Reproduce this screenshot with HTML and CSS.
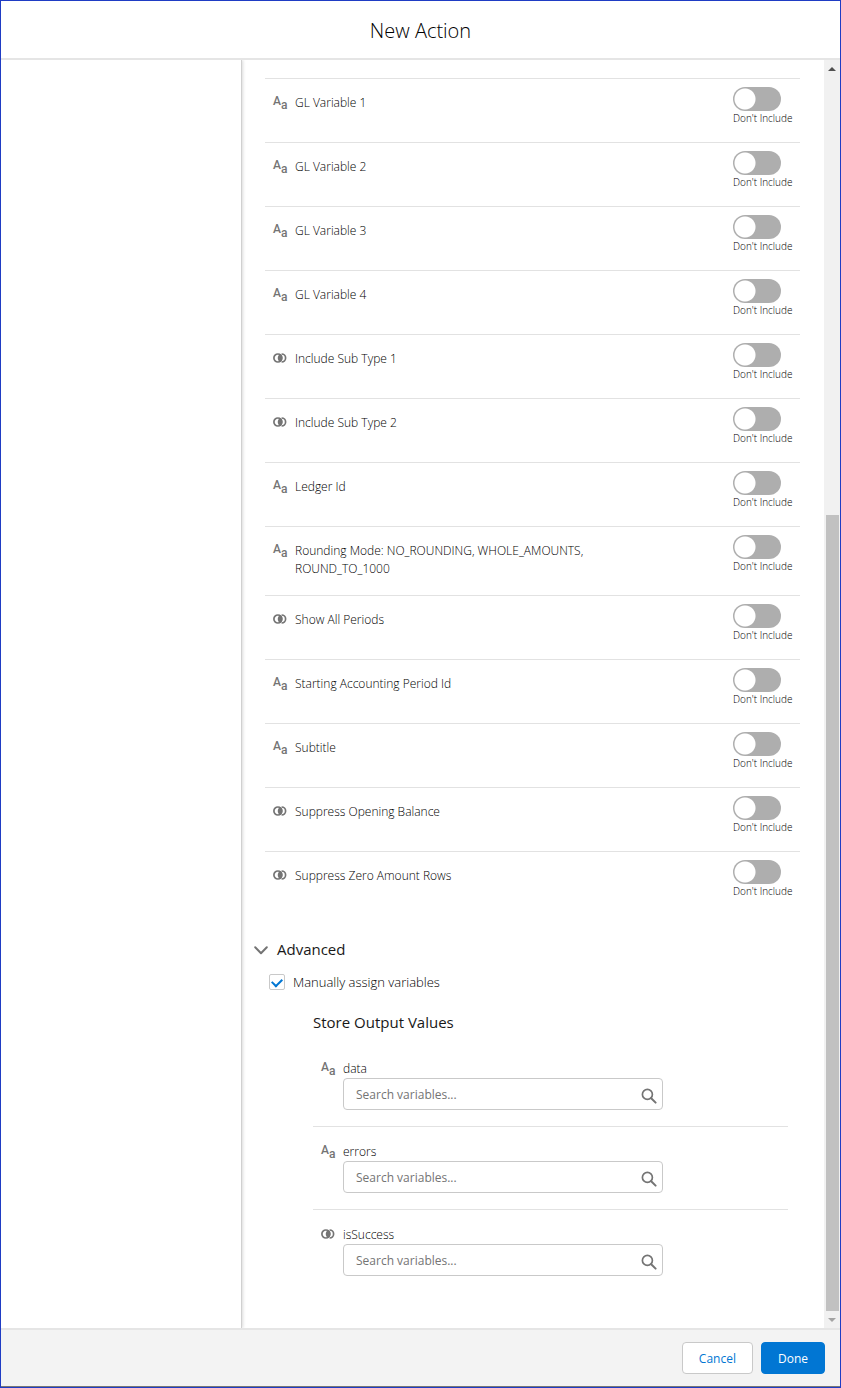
FILE: index.html
```
<!DOCTYPE html>
<html lang="en">
<head>
    <meta charset="UTF-8">
    <meta name="viewport" content="width=device-width, initial-scale=1.0">
    <title>New Action</title>
    <link rel="stylesheet" href="styles.css">
</head>
<body>
    <svg class="sprite" aria-hidden="true">
        <symbol id="icon-boolean" viewBox="0 0 14 10">
            <circle cx="4.9" cy="5" r="4" fill="none" stroke="currentColor" stroke-width="1.7"/>
            <path d="M8.600 1a4 4 0 1 1 0 8" fill="none" stroke="currentColor" stroke-width="1.7"/>
            <path d="M7 1a4.700 4.700 0 0 1 0 8a4.700 4.700 0 0 1 0-8z" fill="currentColor"/>
        </symbol>
        <symbol id="icon-search" viewBox="0 0 16 16">
            <circle cx="6.4" cy="6.4" r="5" fill="none" stroke="currentColor" stroke-width="1.7"/>
            <path d="M10.2 10.2l4.4 4.4" fill="none" stroke="currentColor" stroke-width="2" stroke-linecap="round"/>
        </symbol>
    </svg>

    <div class="modal">
        <header class="modal-header">
            <h1>New Action</h1>
        </header>

        <div class="modal-body">
            <aside class="sidebar"></aside>

            <main class="content">
                <ul class="param-list">
                    <li class="param">
                        <span class="type-icon type-text" aria-hidden="true">A<span>a</span></span>
                        <label class="param-name" for="gl1">GL Variable 1</label>
                        <div class="toggle"><input type="checkbox" id="gl1"><span>Don't Include</span></div>
                    </li>
                    <li class="param">
                        <span class="type-icon type-text" aria-hidden="true">A<span>a</span></span>
                        <label class="param-name" for="gl2">GL Variable 2</label>
                        <div class="toggle"><input type="checkbox" id="gl2"><span>Don't Include</span></div>
                    </li>
                    <li class="param">
                        <span class="type-icon type-text" aria-hidden="true">A<span>a</span></span>
                        <label class="param-name" for="gl3">GL Variable 3</label>
                        <div class="toggle"><input type="checkbox" id="gl3"><span>Don't Include</span></div>
                    </li>
                    <li class="param">
                        <span class="type-icon type-text" aria-hidden="true">A<span>a</span></span>
                        <label class="param-name" for="gl4">GL Variable 4</label>
                        <div class="toggle"><input type="checkbox" id="gl4"><span>Don't Include</span></div>
                    </li>
                    <li class="param">
                        <svg class="type-icon"><use href="#icon-boolean"/></svg>
                        <label class="param-name" for="subtype1">Include Sub Type 1</label>
                        <div class="toggle"><input type="checkbox" id="subtype1"><span>Don't Include</span></div>
                    </li>
                    <li class="param">
                        <svg class="type-icon"><use href="#icon-boolean"/></svg>
                        <label class="param-name" for="subtype2">Include Sub Type 2</label>
                        <div class="toggle"><input type="checkbox" id="subtype2"><span>Don't Include</span></div>
                    </li>
                    <li class="param">
                        <span class="type-icon type-text" aria-hidden="true">A<span>a</span></span>
                        <label class="param-name" for="ledger">Ledger Id</label>
                        <div class="toggle"><input type="checkbox" id="ledger"><span>Don't Include</span></div>
                    </li>
                    <li class="param">
                        <span class="type-icon type-text" aria-hidden="true">A<span>a</span></span>
                        <label class="param-name" for="rounding">Rounding Mode: NO_ROUNDING, WHOLE_AMOUNTS, ROUND_TO_1000</label>
                        <div class="toggle"><input type="checkbox" id="rounding"><span>Don't Include</span></div>
                    </li>
                    <li class="param">
                        <svg class="type-icon"><use href="#icon-boolean"/></svg>
                        <label class="param-name" for="periods">Show All Periods</label>
                        <div class="toggle"><input type="checkbox" id="periods"><span>Don't Include</span></div>
                    </li>
                    <li class="param">
                        <span class="type-icon type-text" aria-hidden="true">A<span>a</span></span>
                        <label class="param-name" for="starting">Starting Accounting Period Id</label>
                        <div class="toggle"><input type="checkbox" id="starting"><span>Don't Include</span></div>
                    </li>
                    <li class="param">
                        <span class="type-icon type-text" aria-hidden="true">A<span>a</span></span>
                        <label class="param-name" for="subtitle">Subtitle</label>
                        <div class="toggle"><input type="checkbox" id="subtitle"><span>Don't Include</span></div>
                    </li>
                    <li class="param">
                        <svg class="type-icon"><use href="#icon-boolean"/></svg>
                        <label class="param-name" for="opening">Suppress Opening Balance</label>
                        <div class="toggle"><input type="checkbox" id="opening"><span>Don't Include</span></div>
                    </li>
                    <li class="param">
                        <svg class="type-icon"><use href="#icon-boolean"/></svg>
                        <label class="param-name" for="zero">Suppress Zero Amount Rows</label>
                        <div class="toggle"><input type="checkbox" id="zero"><span>Don't Include</span></div>
                    </li>
                </ul>

                <section class="advanced">
                    <button type="button" class="advanced-toggle" aria-expanded="true">
                        <svg class="chevron" viewBox="0 0 14 9"><path d="M1.2 1.3L7 7.2l5.8-5.9" fill="none" stroke="currentColor" stroke-width="2" stroke-linecap="round" stroke-linejoin="round"/></svg>
                        Advanced
                    </button>

                    <label class="manual">
                        <input type="checkbox" checked>
                        Manually assign variables
                    </label>

                    <div class="outputs">
                        <h2>Store Output Values</h2>
                        <div class="output">
                            <span class="type-icon type-text" aria-hidden="true">A<span>a</span></span>
                            <div class="output-field">
                                <label for="out-data">data</label>
                                <div class="search">
                                    <input type="text" id="out-data" placeholder="Search variables...">
                                    <svg><use href="#icon-search"/></svg>
                                </div>
                            </div>
                        </div>
                        <div class="output">
                            <span class="type-icon type-text" aria-hidden="true">A<span>a</span></span>
                            <div class="output-field">
                                <label for="out-errors">errors</label>
                                <div class="search">
                                    <input type="text" id="out-errors" placeholder="Search variables...">
                                    <svg><use href="#icon-search"/></svg>
                                </div>
                            </div>
                        </div>
                        <div class="output">
                            <svg class="type-icon"><use href="#icon-boolean"/></svg>
                            <div class="output-field">
                                <label for="out-success">isSuccess</label>
                                <div class="search">
                                    <input type="text" id="out-success" placeholder="Search variables...">
                                    <svg><use href="#icon-search"/></svg>
                                </div>
                            </div>
                        </div>
                    </div>
                </section>
            </main>

            <div class="scrollbar" aria-hidden="true">
                <span class="arrow arrow-up"></span>
                <span class="track"></span>
                <span class="thumb"></span>
                <span class="arrow arrow-down"></span>
            </div>
        </div>

        <footer class="modal-footer">
            <button type="button" class="btn btn-cancel">Cancel</button>
            <button type="button" class="btn btn-done">Done</button>
        </footer>
    </div>
</body>
</html>
```
FILE: styles.css
```
* {
    box-sizing: border-box;
}
body {
    margin: 0;
    font-family: "Open Sans", "Noto Sans", sans-serif;
    font-size: 12px;
    font-weight: 300;
    line-height: 18px;
    color: #000;
    background: #fff;
}
button,
input {
    font-family: inherit;
}
.sprite {
    display: none;
}
.modal {
    display: flex;
    flex-direction: column;
    min-height: 100vh;
    border: 1px solid #1f3cc4;
}

/* header */
.modal-header {
    padding: 17px 16px 15px;
    border-bottom: 2px solid #e5e5e5;
    text-align: center;
}
.modal-header h1 {
    margin: 0;
    font-size: 20px;
    font-weight: 300;
    line-height: 25px;
}

/* body */
.modal-body {
    display: flex;
    flex: 1;
}
.sidebar {
    flex: 0 0 241px;
    border-right: 1px solid #d0d0d0;
    box-shadow: 1px 0 3px rgba(0, 0, 0, 0.15);
    clip-path: inset(0 -4px 0 0);
}
.content {
    flex: 1;
    padding: 18px 24px 36px 23px;
}
.param-list {
    margin: 0;
    padding: 0;
    list-style: none;
}
.param {
    display: flex;
    align-items: flex-start;
    min-height: 64px;
    padding: 0 8px;
    border-top: 1px solid #e2e2e2;
}
.type-icon {
    flex: none;
    width: 14px;
    height: 10px;
    margin-top: 18px;
    margin-right: 8px;
    color: #747474;
}
.type-text {
    display: flex;
    font-family: Roboto, sans-serif;
    font-size: 12px;
    font-weight: 500;
    line-height: 8px;
}
.type-text span {
    padding-top: 4px;
}
.param-name {
    width: 300px;
    margin: 15px auto 17px 0;
}
.toggle {
    flex: none;
    width: 59px;
    margin-top: 8px;
    font-size: 10px;
    line-height: 14px;
    white-space: nowrap;
}
.toggle span {
    display: block;
}
.toggle input {
    display: block;
    width: 48px;
    height: 24px;
    margin: 0;
    appearance: none;
    border-radius: 12px;
    background: radial-gradient(circle at 12px 12px, #fff 10px, #aeaeae 11px);
    cursor: pointer;
}

/* advanced */
.advanced {
    padding-top: 23px;
}
.advanced-toggle {
    display: flex;
    align-items: center;
    gap: 9px;
    margin-left: -11px;
    padding: 0;
    border: 0;
    background: none;
    font-size: 15px;
    font-weight: 400;
    line-height: 22px;
    color: #181818;
    cursor: pointer;
}
.chevron {
    width: 14px;
    height: 9px;
    margin-top: 2px;
    color: #747474;
}
.manual {
    display: flex;
    align-items: center;
    gap: 8px;
    margin: 12px 0 0 4px;
    font-size: 13px;
    line-height: 20px;
}
.manual input {
    display: grid;
    place-items: center;
    width: 16px;
    height: 16px;
    margin: 0;
    appearance: none;
    border: 1px solid #c9c9c9;
    border-radius: 2px;
    background: #fff;
}
.manual input:checked::before {
    content: "";
    width: 8px;
    height: 5px;
    margin-bottom: 2px;
    border: solid #0176d3;
    border-width: 0 0 2px 2px;
    transform: rotate(-45deg);
}
.outputs {
    padding: 19px 12px 0 48px;
}
.outputs h2 {
    margin: 0 0 11px;
    font-size: 15px;
    font-weight: 400;
    line-height: 22px;
    color: #181818;
}
.output {
    display: flex;
    padding: 0 8px 16px;
}
.output + .output {
    border-top: 1px solid #e2e2e2;
}
.output .type-icon {
    margin-top: 19px;
}
.output-field {
    flex: 0 1 320px;
    padding-top: 16px;
}
.output-field label {
    display: block;
}
.search {
    display: flex;
    align-items: center;
    height: 32px;
    padding-right: 5px;
    border: 1px solid #c9c9c9;
    border-radius: 4px;
}
.search input {
    flex: 1;
    min-width: 0;
    padding: 0 12px;
    border: 0;
    outline: 0;
    background: none;
    font-size: 12px;
}
.search input::placeholder {
    color: #747474;
}
.search svg {
    width: 16px;
    height: 16px;
    margin-top: 3px;
    color: #747474;
}

/* scrollbar */
.scrollbar {
    display: flex;
    flex-direction: column;
    flex: 0 0 16px;
    background: #f1f1f1;
}
.arrow {
    display: grid;
    place-items: center;
    height: 17px;
}
.arrow::before {
    content: "";
    border: 4px solid transparent;
}
.arrow-up::before {
    border-top: 0;
    border-bottom-color: #505050;
}
.arrow-down::before {
    border-bottom: 0;
    border-top-color: #a3a3a3;
}
.track {
    flex: 438;
}
.thumb {
    flex: 796;
    margin: 0 1px 0 2px;
    background: #c1c1c1;
}

/* footer */
.modal-footer {
    display: flex;
    justify-content: flex-end;
    gap: 8px;
    padding: 12px 15px;
    border-top: 2px solid #e5e5e5;
    border-bottom: 1px solid #777;
    background: #f3f3f3;
}
.btn {
    height: 32px;
    padding: 0 16px;
    border: 1px solid #c9c9c9;
    border-radius: 4px;
    font-size: 12px;
    cursor: pointer;
}
.btn-cancel {
    background: #fff;
    color: #0176d3;
}
.btn-done {
    border-color: #0176d3;
    background: #0176d3;
    color: #fff;
}
```
